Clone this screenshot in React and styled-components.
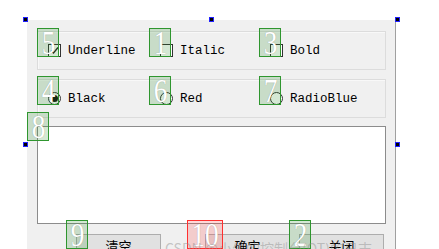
import React from 'react'
import styled, { createGlobalStyle } from 'styled-components'

const GlobalStyle = createGlobalStyle`
  html, body {
    margin: 0;
    padding: 0;
    background: #ffffff;
  }
`

const checks = [
  { order: 5, label: 'Underline', checked: true },
  { order: 1, label: 'Italic', checked: false },
  { order: 3, label: 'Bold', checked: false }
]

const radios = [
  { order: 4, label: 'Black', checked: true },
  { order: 6, label: 'Red', checked: false },
  { order: 7, label: 'RadioBlue', checked: false }
]

const buttons = [
  { order: 9, label: '清空', offset: 39 },
  { order: 10, label: '确定', offset: 44, current: true },
  { order: 2, label: '关闭', offset: 9 }
]

const handles = [
  { x: 25, y: 19 },
  { x: 211, y: 19 },
  { x: 397, y: 19 },
  { x: 25, y: 144 },
  { x: 397, y: 144 }
]

const Badge = ({ order, current }) => (
  <Tab $current={ current } $wide={ order > 9 }>
    <Digits>{ order }</Digits>
  </Tab>
)

const CheckItem = ({ order, label, checked }) => (
  <Item>
    <Badge order={ order } />
    <CheckBox>
      { checked &&
        <svg width="11" height="11" viewBox="0 0 11 11">
          <path d="M2 5.5 L4.5 8 L9 2.5" fill="none" stroke="#222" strokeWidth="1.4" />
        </svg>
      }
    </CheckBox>
    <Label>{ label }</Label>
  </Item>
)

const RadioItem = ({ order, label, checked }) => (
  <Item>
    <Badge order={ order } />
    <Radio>
      { checked && <Dot /> }
    </Radio>
    <Label>{ label }</Label>
  </Item>
)

const App = () => {
  return (
    <Canvas>
      <GlobalStyle />
      <Form>
        <Group>
          { checks.map(c => <CheckItem key={ c.label } { ...c } />) }
        </Group>
        <Group>
          { radios.map(r => <RadioItem key={ r.label } { ...r } />) }
        </Group>
        <TextEdit>
          <Badge order={ 8 } />
        </TextEdit>
        <ButtonRow>
          { buttons.map(b => (
            <Button key={ b.label } $offset={ b.offset }>
              <Badge order={ b.order } current={ b.current } />
              { b.label }
            </Button>
          )) }
        </ButtonRow>
      </Form>
      <Watermark>CSDN @小牛的控制台(QT)的日志</Watermark>
      { handles.map((h, i) => (
        <Handle key={ i } style={ { left: h.x - 2, top: h.y - 2 } } />
      )) }
    </Canvas>
  )
}

export default App

const Canvas = styled.div`
  position: relative;
  width: 439px;
  height: 249px;
  overflow: hidden;
  padding: 20px 0 0 27px;
  box-sizing: border-box;
  background: #ffffff;
`

const Form = styled.div`
  width: 369px;
  height: 260px;
  box-sizing: border-box;
  background: #f0f0f0;
  border-right: 1px solid #a0a0a0;
  padding: 11px 9px 0 10px;
  display: flex;
  flex-direction: column;
`

const Group = styled.div`
  height: 39px;
  box-sizing: border-box;
  border: 1px solid #dcdcdc;
  box-shadow: inset 1px 1px 0 #f8f8f8;
  padding-left: 10px;
  margin-bottom: 9px;
  display: grid;
  grid-template-columns: 112px 110px 1fr;
  align-items: center;
`

const Item = styled.div`
  position: relative;
  height: 16px;
  display: flex;
  align-items: center;
  gap: 7px;
`

const CheckBox = styled.div`
  width: 13px;
  height: 13px;
  box-sizing: border-box;
  border: 1px solid #333333;
  background: #ffffff;
  display: flex;
  align-items: center;
  justify-content: center;
`

const Radio = styled.div`
  width: 13px;
  height: 13px;
  box-sizing: border-box;
  border: 1px solid #333333;
  border-radius: 50%;
  background: #ffffff;
  display: flex;
  align-items: center;
  justify-content: center;
`

const Dot = styled.div`
  width: 7px;
  height: 7px;
  border-radius: 50%;
  background: #111111;
`

const Label = styled.span`
  font-family: "Liberation Mono", monospace;
  font-size: 12.5px;
  color: #000000;
  white-space: nowrap;
`

const TextEdit = styled.div`
  position: relative;
  height: 98px;
  box-sizing: border-box;
  border: 1px solid #8c8c8c;
  background: #ffffff;
  margin-top: -1px;
`

const ButtonRow = styled.div`
  display: flex;
  margin-top: 10px;
`

const Button = styled.div`
  position: relative;
  width: 85px;
  height: 23px;
  box-sizing: border-box;
  margin-left: ${ p => p.$offset }px;
  border: 1px solid #adadad;
  background: #e1e1e1;
  display: flex;
  align-items: center;
  justify-content: center;
  font-family: "Noto Sans CJK SC", sans-serif;
  font-size: 13px;
  color: #000000;
`

const Tab = styled.div`
  position: absolute;
  left: ${ p => p.$wide ? -19 : -11 }px;
  top: -15px;
  width: ${ p => p.$wide ? 36 : 22 }px;
  height: 29px;
  box-sizing: border-box;
  border: 1px solid ${ p => p.$current ? '#ff3030' : '#2f962f' };
  background: ${ p => p.$current ? 'rgba(255, 60, 60, 0.2)' : 'rgba(40, 140, 40, 0.2)' };
  display: flex;
  align-items: center;
  justify-content: center;
  z-index: 2;
`

const Digits = styled.span`
  display: inline-block;
  color: #ffffff;
  font-family: "Liberation Serif", serif;
  font-size: 34px;
  line-height: 27px;
  transform: scaleX(0.8);
  text-shadow: 0 0 1px rgba(0, 0, 0, 0.3);
`

const Watermark = styled.div`
  position: absolute;
  left: 165px;
  top: 238px;
  font-family: "Noto Sans CJK SC", sans-serif;
  font-size: 14px;
  color: rgba(140, 140, 140, 0.45);
  white-space: nowrap;
  z-index: 3;
`

const Handle = styled.div`
  position: absolute;
  width: 5px;
  height: 5px;
  box-sizing: border-box;
  background: #000000;
  border: 1px solid #2020ff;
  z-index: 4;
`
